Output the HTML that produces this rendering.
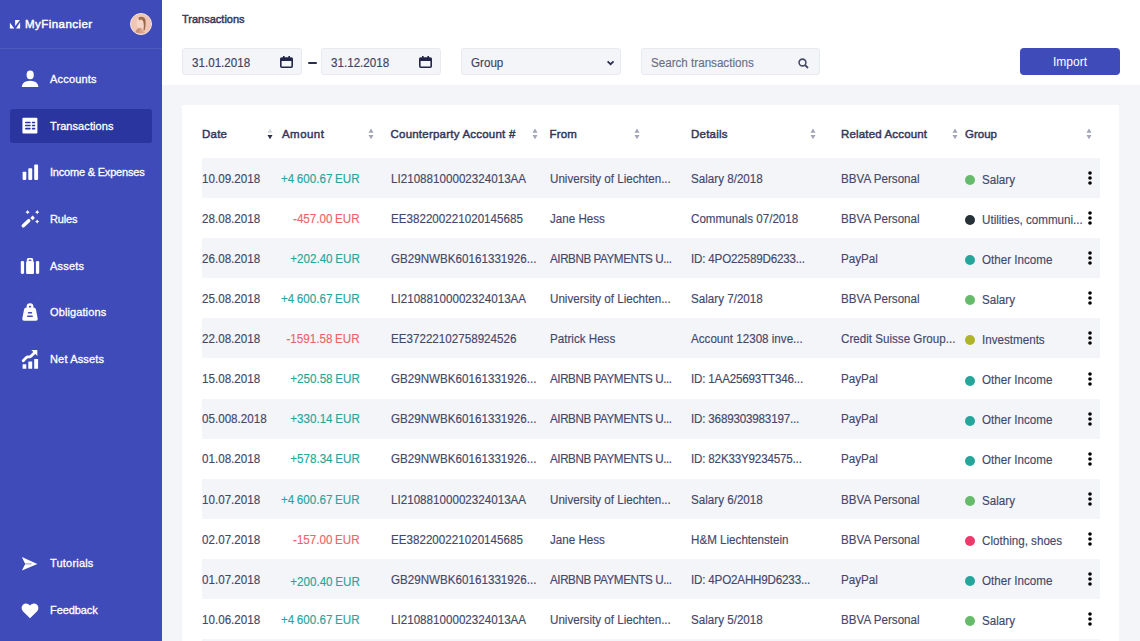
<!DOCTYPE html>
<html><head><meta charset="utf-8">
<style>
*{margin:0;padding:0;box-sizing:border-box;}
html,body{width:1140px;height:641px;overflow:hidden;background:#fff;font-family:"Liberation Sans",sans-serif;}
.abs{position:absolute;}
#sb{position:absolute;left:0;top:0;width:162px;height:641px;background:#3F4BB8;}
#sb .sep{position:absolute;left:0;top:48px;width:162px;height:1px;background:rgba(255,255,255,0.08);}
.logo{position:absolute;left:25px;top:17px;font-size:11.5px;font-weight:normal;letter-spacing:0.45px;-webkit-text-stroke:0.45px #fff;color:#fff;line-height:14px;}
.avatar{position:absolute;left:130px;top:13px;width:22px;height:22px;border-radius:50%;background:#F2C2AE;border:1px solid #f9e6de;overflow:hidden;}
.nav{position:absolute;left:10px;width:142px;height:34px;border-radius:3px;}
.nav.act{background:#2A35A0;}
.nav svg{position:absolute;left:12px;top:9px;}
.nav span{position:absolute;left:40px;top:11px;font-size:11px;font-weight:normal;-webkit-text-stroke:0.3px #fff;color:#fff;line-height:13px;white-space:nowrap;}
#hdr{position:absolute;left:162px;top:0;width:978px;height:85px;background:#fff;}
#main{position:absolute;left:162px;top:85px;width:978px;height:556px;background:#F4F5F9;}
.title{position:absolute;left:182px;top:13px;font-size:11px;font-weight:normal;-webkit-text-stroke:0.45px currentColor;color:#34375A;line-height:13px;}
.inp{position:absolute;top:48px;height:27px;background:#F4F5F9;border:1px solid #E8EAF0;border-radius:3px;}
.inp span{position:absolute;left:8.5px;top:6.5px;font-size:12.5px;transform:scaleX(0.93);transform-origin:0 0;color:#3E4160;-webkit-text-stroke:0.15px currentColor;line-height:14px;white-space:nowrap;}
.btn{position:absolute;left:1020px;top:48px;width:100px;height:27px;background:#3F4BB8;border-radius:4px;color:#fff;font-size:12px;text-align:center;line-height:29px;}
#card{position:absolute;left:182px;top:105px;width:937px;height:536px;background:#fff;}
.th{position:absolute;top:128px;font-size:11.5px;font-weight:normal;-webkit-text-stroke:0.45px currentColor;color:#33365A;line-height:13px;white-space:nowrap;letter-spacing:0.22px;}
.sort{position:absolute;top:128px;width:6px;height:12px;}
.row{position:absolute;left:202px;width:898px;height:40px;}
.row.g{background:#F4F5F9;}
.c{position:absolute;top:14px;font-size:12.5px;color:#44476A;-webkit-text-stroke:0.15px currentColor;line-height:14px;white-space:nowrap;transform:scaleX(0.93);transform-origin:0 0;}
.c.r{transform-origin:100% 0;word-spacing:-0.6px;}
.pos{color:#26A69A;}
.neg{color:#EC6468;}
.dot{position:absolute;left:763px;top:16.5px;width:10px;height:10px;border-radius:50%;}
.keb{position:absolute;left:886px;top:13px;width:4px;height:14px;}
</style></head><body>

<div id="sb">
<svg class="abs" style="left:0;top:0;z-index:5" width="162" height="641" viewBox="0 0 162 641">
<polygon points="9.9,22.7 9.9,28.5 14.3,28.5" fill="#fff"/>
<polygon points="15.1,20.1 19.9,20.1 15.1,26.3" fill="#fff"/>
<polygon points="20.1,22.2 20.1,28.5 16,28.5" fill="#fff"/>
<ellipse cx="30.2" cy="74.9" rx="3.6" ry="4.3" fill="#fff"/>
<path d="M21.7 87 Q22.4 80.8 30.1 80.8 Q37.8 80.8 38.5 87 Z" fill="#fff"/>
<rect x="22.4" y="117.7" width="15" height="15.9" rx="1" fill="#fff"/>
<rect x="25" y="121.65" width="5.7" height="1.7" rx="0.85" fill="#2A35A0"/><rect x="31.8" y="121.65" width="3.5" height="1.7" rx="0.85" fill="#2A35A0"/>
<rect x="25" y="124.65" width="5.7" height="1.7" rx="0.85" fill="#2A35A0"/><rect x="31.8" y="124.65" width="3.5" height="1.7" rx="0.85" fill="#2A35A0"/>
<rect x="25" y="127.75" width="5.7" height="1.7" rx="0.85" fill="#2A35A0"/><rect x="31.8" y="127.75" width="3.5" height="1.7" rx="0.85" fill="#2A35A0"/>
<rect x="22.6" y="171.8" width="3.7" height="8.1" rx="0.8" fill="#fff"/>
<rect x="28.3" y="168.3" width="3.9" height="11.6" rx="0.8" fill="#fff"/>
<rect x="34.2" y="164.6" width="3.9" height="15.3" rx="0.8" fill="#fff"/>
<path d="M23.3 225.7 L28.7 220.7" stroke="#fff" stroke-width="3.5" stroke-linecap="round"/>
<polygon points="32.6,215.6 34.9,217.9 32.6,220.2 30.3,217.9" fill="#fff"/>
<path d="M27.6 210.1 Q28.05 211.75 29.700000000000003 212.2 Q28.05 212.64999999999998 27.6 214.29999999999998 Q27.150000000000002 212.64999999999998 25.5 212.2 Q27.150000000000002 211.75 27.6 210.1 Z" fill="#fff"/><path d="M37.2 210.1 Q37.650000000000006 211.75 39.300000000000004 212.2 Q37.650000000000006 212.64999999999998 37.2 214.29999999999998 Q36.75 212.64999999999998 35.1 212.2 Q36.75 211.75 37.2 210.1 Z" fill="#fff"/><path d="M37.2 219.5 Q37.650000000000006 221.15 39.300000000000004 221.6 Q37.650000000000006 222.04999999999998 37.2 223.7 Q36.75 222.04999999999998 35.1 221.6 Q36.75 221.15 37.2 219.5 Z" fill="#fff"/>
<rect x="20.8" y="261" width="3.3" height="12.9" rx="1.3" fill="#fff"/>
<rect x="35.9" y="261" width="3.3" height="12.9" rx="1.3" fill="#fff"/>
<rect x="26.1" y="261.6" width="7.9" height="12.3" rx="0.8" fill="#fff"/>
<rect x="26.8" y="258.1" width="6.4" height="5" rx="1.6" fill="#fff"/>
<ellipse cx="30" cy="260.3" rx="1.6" ry="0.75" fill="#3F4BB8"/>
<circle cx="30" cy="306.6" r="3.4" fill="#fff"/><circle cx="30" cy="306.9" r="1.2" fill="#3F4BB8"/>
<path d="M26.5 307.6 L33.5 307.6 Q35.6 307.6 36 309.8 L37.7 318.6 Q38.1 320.8 35.9 320.8 L24.1 320.8 Q21.9 320.8 22.3 318.6 L24 309.8 Q24.4 307.6 26.5 307.6 Z" fill="#fff"/>
<rect x="27.9" y="312.1" width="4.2" height="1.5" rx="0.5" fill="#3F4BB8"/><rect x="27.1" y="315.6" width="5.7" height="1.5" rx="0.5" fill="#3F4BB8"/>
<rect x="22.6" y="364.2" width="3.7" height="4.6" rx="0.5" fill="#fff"/>
<rect x="28.3" y="361.6" width="3.9" height="7.2" rx="0.5" fill="#fff"/>
<rect x="34.2" y="359" width="3.9" height="9.8" rx="0.5" fill="#fff"/>
<path d="M23.2 360.8 L26.2 357.6 Q27 356.8 28.2 356.8 L29.3 356.8 Q30.4 356.8 31.2 356 L35.2 352.1" stroke="#fff" stroke-width="2.8" stroke-linecap="round" stroke-linejoin="round" fill="none"/>
<polygon points="31.3,350.1 37.3,350.1 37.3,356.1" fill="#fff"/>
<path d="M21.9 557.1 L37.4 563.9 L21.9 570.6 L25.2 563.9 Z" fill="#fff"/>
<path d="M25.2 563.9 L31.5 563.9" stroke="#3F4BB8" stroke-width="0.6"/>
<path d="M30 618.3 L23.1 611.5 C21.1 609.5 21.1 606.1 23.2 604.5 C25.2 602.9 28.2 603.3 30 605.6 C31.8 603.3 34.8 602.9 36.8 604.5 C38.9 606.1 38.9 609.5 36.9 611.5 Z" fill="#fff"/>
</svg>
  <div class="logo">MyFinancier</div>
  <div class="avatar">
    <svg width="22" height="22" viewBox="0 0 22 22" style="position:absolute;left:-1px;top:-1px">
      <rect width="22" height="22" fill="#F1C6B6"/>
      <ellipse cx="11" cy="10" rx="4.5" ry="5.5" fill="#F6D6C8"/>
      <path d="M8.5 4.5 C11 3 14.5 3.5 15.5 7 C16 10 15.5 14 14.8 17 L13.5 17.5 C14 14 14 10 13 8 C12 6.5 10 6.5 9 7.5 Z" fill="#9A6A4A"/>
      <path d="M9 7 C10 5.5 12 5.5 13 7" stroke="#B7896A" stroke-width="0.8" fill="none"/>
      <path d="M5 20 C6 16 8.5 14.5 10 15 L12 20 Z" fill="#C89478"/>
      <path d="M10.5 14 L13 18 L15 20 L9 21 Z" fill="#D9A58B"/>
    </svg>
  </div>
  <div class="sep"></div>

  <div class="nav" style="top:62px">
    <span style="letter-spacing:0.19px">Accounts</span></div>
  <div class="nav act" style="top:109px">
    <span style="letter-spacing:0.08px">Transactions</span></div>
  <div class="nav" style="top:155px">
    <span style="letter-spacing:-0.2px">Income &amp; Expenses</span></div>
  <div class="nav" style="top:202px">
    <span style="letter-spacing:-0.15px">Rules</span></div>
  <div class="nav" style="top:249px">
    <span style="letter-spacing:0.22px">Assets</span></div>
  <div class="nav" style="top:295px">
    <span style="letter-spacing:0.11px">Obligations</span></div>
  <div class="nav" style="top:342px">
    <span style="letter-spacing:0.16px">Net Assets</span></div>

  <div class="nav" style="top:546px">
    <span style="letter-spacing:0.2px">Tutorials</span></div>
  <div class="nav" style="top:593px">
    <span style="letter-spacing:-0.09px">Feedback</span></div>
</div>

<div id="hdr"></div>
<div id="main"></div>
<div class="title">Transactions</div>

<div class="inp" style="left:182px;width:120px"><span>31.01.2018</span>
  <svg class="abs" style="left:97px;top:7px" width="13" height="12" viewBox="0 0 13 12"><rect x="0.8" y="2" width="11.4" height="9.2" rx="1" fill="none" stroke="#23264A" stroke-width="1.6"/><rect x="0.8" y="2" width="11.4" height="3" fill="#23264A"/><rect x="3" y="0" width="1.6" height="3" fill="#23264A"/><rect x="8.4" y="0" width="1.6" height="3" fill="#23264A"/></svg>
</div>
<div class="abs" style="left:308px;top:61.5px;width:8.5px;height:2px;background:#2A2D4F;border-radius:1px"></div>
<div class="inp" style="left:321px;width:120px"><span>31.12.2018</span>
  <svg class="abs" style="left:97px;top:7px" width="13" height="12" viewBox="0 0 13 12"><rect x="0.8" y="2" width="11.4" height="9.2" rx="1" fill="none" stroke="#23264A" stroke-width="1.6"/><rect x="0.8" y="2" width="11.4" height="3" fill="#23264A"/><rect x="3" y="0" width="1.6" height="3" fill="#23264A"/><rect x="8.4" y="0" width="1.6" height="3" fill="#23264A"/></svg>
</div>
<div class="inp" style="left:461px;width:160px"><span>Group</span>
  <svg class="abs" style="left:144px;top:10.5px" width="9" height="6" viewBox="0 0 9 6"><path d="M1.6 1.3 L4.6 4.2 L7.6 1.3" stroke="#2A2D50" stroke-width="1.7" fill="none"/></svg>
</div>
<div class="inp" style="left:641px;width:179px"><span style="color:#6B6F86;top:6.5px;left:9px">Search transactions</span>
  <svg class="abs" style="left:156px;top:8.5px" width="11" height="11" viewBox="0 0 11 11"><circle cx="4.5" cy="4.5" r="3.4" fill="none" stroke="#474A68" stroke-width="1.6"/><path d="M7 7 L10 10" stroke="#474A68" stroke-width="1.8"/></svg>
</div>
<div class="btn">Import</div>

<div id="card"></div>

<div id="tbl">
<div class="th" style="left:202px">Date</div>
<svg class="sort" style="left:267.4px" width="6" height="12" viewBox="0 0 6 12"><path d="M0.5 4.7 L3 0.5 L5.5 4.7 Z" fill="#D5D7E0"/><path d="M0.5 7 L5.5 7 L3 11.2 Z" fill="#2A2D4F"/></svg>
<div class="th" style="left:282px;letter-spacing:0.45px">Amount</div>
<svg class="sort" style="left:367.5px" width="6" height="12" viewBox="0 0 6 12"><path d="M0.5 4.7 L3 0.5 L5.5 4.7 Z" fill="#A3A5B8"/><path d="M0.5 7 L5.5 7 L3 11.2 Z" fill="#A3A5B8"/></svg>
<div class="th" style="left:390.5px">Counterparty Account #</div>
<svg class="sort" style="left:531.7px" width="6" height="12" viewBox="0 0 6 12"><path d="M0.5 4.7 L3 0.5 L5.5 4.7 Z" fill="#A3A5B8"/><path d="M0.5 7 L5.5 7 L3 11.2 Z" fill="#A3A5B8"/></svg>
<div class="th" style="left:549.5px;letter-spacing:0.17px">From</div>
<svg class="sort" style="left:633.8px" width="6" height="12" viewBox="0 0 6 12"><path d="M0.5 4.7 L3 0.5 L5.5 4.7 Z" fill="#A3A5B8"/><path d="M0.5 7 L5.5 7 L3 11.2 Z" fill="#A3A5B8"/></svg>
<div class="th" style="left:691px">Details</div>
<svg class="sort" style="left:809.6px" width="6" height="12" viewBox="0 0 6 12"><path d="M0.5 4.7 L3 0.5 L5.5 4.7 Z" fill="#A3A5B8"/><path d="M0.5 7 L5.5 7 L3 11.2 Z" fill="#A3A5B8"/></svg>
<div class="th" style="left:841px;letter-spacing:0.16px">Related Account</div>
<svg class="sort" style="left:951.6px" width="6" height="12" viewBox="0 0 6 12"><path d="M0.5 4.7 L3 0.5 L5.5 4.7 Z" fill="#A3A5B8"/><path d="M0.5 7 L5.5 7 L3 11.2 Z" fill="#A3A5B8"/></svg>
<div class="th" style="left:965px;letter-spacing:0px">Group</div>
<svg class="sort" style="left:1085.9px" width="6" height="12" viewBox="0 0 6 12"><path d="M0.5 4.7 L3 0.5 L5.5 4.7 Z" fill="#A3A5B8"/><path d="M0.5 7 L5.5 7 L3 11.2 Z" fill="#A3A5B8"/></svg>
<div class="row g" style="top:158px">
<div class="dot" style="background:#66BB6A"></div>
<svg class="keb" width="4" height="14" viewBox="0 0 4 14"><circle cx="2" cy="2" r="1.8"/><circle cx="2" cy="7" r="1.8"/><circle cx="2" cy="12" r="1.8"/></svg>
</div>
<div class="row" style="top:158.00px">
<div class="c" style="left:0px">10.09.2018</div>
<div class="c r pos" style="right:740px">+4 600.67 EUR</div>
<div class="c" style="left:188.5px">LI21088100002324013AA</div>
<div class="c" style="left:347.5px">University of Liechten...</div>
<div class="c" style="left:489px">Salary 8/2018</div>
<div class="c" style="left:639px">BBVA Personal</div>
<div class="c" style="left:779.5px;top:15px">Salary</div>
</div>
<div class="row" style="top:198px">
<div class="dot" style="background:#263238"></div>
<svg class="keb" width="4" height="14" viewBox="0 0 4 14"><circle cx="2" cy="2" r="1.8"/><circle cx="2" cy="7" r="1.8"/><circle cx="2" cy="12" r="1.8"/></svg>
</div>
<div class="row" style="top:198.07px">
<div class="c" style="left:0px">28.08.2018</div>
<div class="c r neg" style="right:740px">-457.00 EUR</div>
<div class="c" style="left:188.5px">EE382200221020145685</div>
<div class="c" style="left:347.5px">Jane Hess</div>
<div class="c" style="left:489px">Communals 07/2018</div>
<div class="c" style="left:639px">BBVA Personal</div>
<div class="c" style="left:779.5px;top:15px">Utilities, communi...</div>
</div>
<div class="row g" style="top:238px">
<div class="dot" style="background:#26A69A"></div>
<svg class="keb" width="4" height="14" viewBox="0 0 4 14"><circle cx="2" cy="2" r="1.8"/><circle cx="2" cy="7" r="1.8"/><circle cx="2" cy="12" r="1.8"/></svg>
</div>
<div class="row" style="top:238.14px">
<div class="c" style="left:0px">26.08.2018</div>
<div class="c r pos" style="right:740px">+202.40 EUR</div>
<div class="c" style="left:188.5px">GB29NWBK60161331926...</div>
<div class="c" style="left:347.5px;letter-spacing:-0.45px">AIRBNB PAYMENTS U...</div>
<div class="c" style="left:489px;letter-spacing:-0.2px">ID: 4PO22589D6233...</div>
<div class="c" style="left:639px">PayPal</div>
<div class="c" style="left:779.5px;top:15px">Other Income</div>
</div>
<div class="row" style="top:278px">
<div class="dot" style="background:#66BB6A"></div>
<svg class="keb" width="4" height="14" viewBox="0 0 4 14"><circle cx="2" cy="2" r="1.8"/><circle cx="2" cy="7" r="1.8"/><circle cx="2" cy="12" r="1.8"/></svg>
</div>
<div class="row" style="top:278.21px">
<div class="c" style="left:0px">25.08.2018</div>
<div class="c r pos" style="right:740px">+4 600.67 EUR</div>
<div class="c" style="left:188.5px">LI21088100002324013AA</div>
<div class="c" style="left:347.5px">University of Liechten...</div>
<div class="c" style="left:489px">Salary 7/2018</div>
<div class="c" style="left:639px">BBVA Personal</div>
<div class="c" style="left:779.5px;top:15px">Salary</div>
</div>
<div class="row g" style="top:318px">
<div class="dot" style="background:#AFB42B"></div>
<svg class="keb" width="4" height="14" viewBox="0 0 4 14"><circle cx="2" cy="2" r="1.8"/><circle cx="2" cy="7" r="1.8"/><circle cx="2" cy="12" r="1.8"/></svg>
</div>
<div class="row" style="top:318.28px">
<div class="c" style="left:0px">22.08.2018</div>
<div class="c r neg" style="right:740px">-1591.58 EUR</div>
<div class="c" style="left:188.5px">EE37222102758924526</div>
<div class="c" style="left:347.5px">Patrick Hess</div>
<div class="c" style="left:489px">Account 12308 inve...</div>
<div class="c" style="left:639px">Credit Suisse Group...</div>
<div class="c" style="left:779.5px;top:15px">Investments</div>
</div>
<div class="row" style="top:359px">
<div class="dot" style="background:#26A69A"></div>
<svg class="keb" width="4" height="14" viewBox="0 0 4 14"><circle cx="2" cy="2" r="1.8"/><circle cx="2" cy="7" r="1.8"/><circle cx="2" cy="12" r="1.8"/></svg>
</div>
<div class="row" style="top:358.35px">
<div class="c" style="left:0px">15.08.2018</div>
<div class="c r pos" style="right:740px">+250.58 EUR</div>
<div class="c" style="left:188.5px">GB29NWBK60161331926...</div>
<div class="c" style="left:347.5px;letter-spacing:-0.45px">AIRBNB PAYMENTS U...</div>
<div class="c" style="left:489px;letter-spacing:-0.2px">ID: 1AA25693TT346...</div>
<div class="c" style="left:639px">PayPal</div>
<div class="c" style="left:779.5px;top:15px">Other Income</div>
</div>
<div class="row g" style="top:399px">
<div class="dot" style="background:#26A69A"></div>
<svg class="keb" width="4" height="14" viewBox="0 0 4 14"><circle cx="2" cy="2" r="1.8"/><circle cx="2" cy="7" r="1.8"/><circle cx="2" cy="12" r="1.8"/></svg>
</div>
<div class="row" style="top:398.42px">
<div class="c" style="left:0px">05.008.2018</div>
<div class="c r pos" style="right:740px">+330.14 EUR</div>
<div class="c" style="left:188.5px">GB29NWBK60161331926...</div>
<div class="c" style="left:347.5px;letter-spacing:-0.45px">AIRBNB PAYMENTS U...</div>
<div class="c" style="left:489px;letter-spacing:-0.2px">ID: 3689303983197...</div>
<div class="c" style="left:639px">PayPal</div>
<div class="c" style="left:779.5px;top:15px">Other Income</div>
</div>
<div class="row" style="top:439px">
<div class="dot" style="background:#26A69A"></div>
<svg class="keb" width="4" height="14" viewBox="0 0 4 14"><circle cx="2" cy="2" r="1.8"/><circle cx="2" cy="7" r="1.8"/><circle cx="2" cy="12" r="1.8"/></svg>
</div>
<div class="row" style="top:438.49px">
<div class="c" style="left:0px">01.08.2018</div>
<div class="c r pos" style="right:740px">+578.34 EUR</div>
<div class="c" style="left:188.5px">GB29NWBK60161331926...</div>
<div class="c" style="left:347.5px;letter-spacing:-0.45px">AIRBNB PAYMENTS U...</div>
<div class="c" style="left:489px;letter-spacing:-0.2px">ID: 82K33Y9234575...</div>
<div class="c" style="left:639px">PayPal</div>
<div class="c" style="left:779.5px;top:15px">Other Income</div>
</div>
<div class="row g" style="top:479px">
<div class="dot" style="background:#66BB6A"></div>
<svg class="keb" width="4" height="14" viewBox="0 0 4 14"><circle cx="2" cy="2" r="1.8"/><circle cx="2" cy="7" r="1.8"/><circle cx="2" cy="12" r="1.8"/></svg>
</div>
<div class="row" style="top:478.56px">
<div class="c" style="left:0px">10.07.2018</div>
<div class="c r pos" style="right:740px">+4 600.67 EUR</div>
<div class="c" style="left:188.5px">LI21088100002324013AA</div>
<div class="c" style="left:347.5px">University of Liechten...</div>
<div class="c" style="left:489px">Salary 6/2018</div>
<div class="c" style="left:639px">BBVA Personal</div>
<div class="c" style="left:779.5px;top:15px">Salary</div>
</div>
<div class="row" style="top:519px">
<div class="dot" style="background:#EC3A6B"></div>
<svg class="keb" width="4" height="14" viewBox="0 0 4 14"><circle cx="2" cy="2" r="1.8"/><circle cx="2" cy="7" r="1.8"/><circle cx="2" cy="12" r="1.8"/></svg>
</div>
<div class="row" style="top:518.63px">
<div class="c" style="left:0px">02.07.2018</div>
<div class="c r neg" style="right:740px">-157.00 EUR</div>
<div class="c" style="left:188.5px">EE382200221020145685</div>
<div class="c" style="left:347.5px">Jane Hess</div>
<div class="c" style="left:489px">H&amp;M Liechtenstein</div>
<div class="c" style="left:639px">BBVA Personal</div>
<div class="c" style="left:779.5px;top:15px">Clothing, shoes</div>
</div>
<div class="row g" style="top:559px">
<div class="dot" style="background:#26A69A"></div>
<svg class="keb" width="4" height="14" viewBox="0 0 4 14"><circle cx="2" cy="2" r="1.8"/><circle cx="2" cy="7" r="1.8"/><circle cx="2" cy="12" r="1.8"/></svg>
</div>
<div class="row" style="top:558.70px">
<div class="c" style="left:0px">01.07.2018</div>
<div class="c r pos" style="right:740px;top:16px">+200.40 EUR</div>
<div class="c" style="left:188.5px">GB29NWBK60161331926...</div>
<div class="c" style="left:347.5px;letter-spacing:-0.45px">AIRBNB PAYMENTS U...</div>
<div class="c" style="left:489px;letter-spacing:-0.2px">ID: 4PO2AHH9D6233...</div>
<div class="c" style="left:639px">PayPal</div>
<div class="c" style="left:779.5px;top:15px">Other Income</div>
</div>
<div class="row" style="top:599px">
<div class="dot" style="background:#66BB6A"></div>
<svg class="keb" width="4" height="14" viewBox="0 0 4 14"><circle cx="2" cy="2" r="1.8"/><circle cx="2" cy="7" r="1.8"/><circle cx="2" cy="12" r="1.8"/></svg>
</div>
<div class="row" style="top:598.77px">
<div class="c" style="left:0px">10.06.2018</div>
<div class="c r pos" style="right:740px">+4 600.67 EUR</div>
<div class="c" style="left:188.5px">LI21088100002324013AA</div>
<div class="c" style="left:347.5px">University of Liechten...</div>
<div class="c" style="left:489px">Salary 5/2018</div>
<div class="c" style="left:639px">BBVA Personal</div>
<div class="c" style="left:779.5px;top:15px">Salary</div>
</div>
<div class="row g" style="top:639px">
<div class="dot" style="background:#26A69A"></div>
<svg class="keb" width="4" height="14" viewBox="0 0 4 14"><circle cx="2" cy="2" r="1.8"/><circle cx="2" cy="7" r="1.8"/><circle cx="2" cy="12" r="1.8"/></svg>
</div>
<div class="row" style="top:638.84px">
<div class="c" style="left:0px">01.06.2018</div>
<div class="c r pos" style="right:740px">+200.40 EUR</div>
<div class="c" style="left:188.5px">GB29NWBK60161331926...</div>
<div class="c" style="left:347.5px;letter-spacing:-0.45px">AIRBNB PAYMENTS U...</div>
<div class="c" style="left:489px;letter-spacing:-0.2px">ID: 4PO2AHH9D6233...</div>
<div class="c" style="left:639px">PayPal</div>
<div class="c" style="left:779.5px;top:15px">Other Income</div>
</div>
</div>

</body></html>
